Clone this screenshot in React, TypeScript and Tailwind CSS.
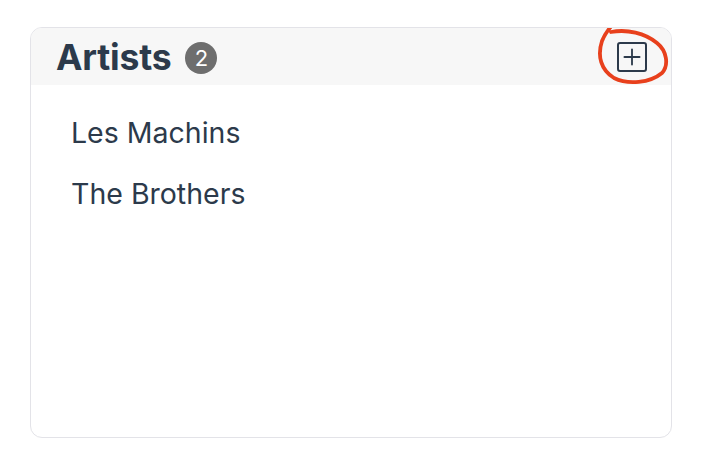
import { Plus } from "lucide-react"

const artists = ["Les Machins", "The Brothers"]

export default function App() {
  return (
    <div className="min-h-screen bg-white pl-[30px] pt-[27px] font-['Inter','Liberation_Sans',sans-serif]">
      <div className="w-[642px] h-[411px] rounded-[12px] border-[1.5px] border-[#e3e3e8] overflow-hidden">
        {/* Header */}
        <div className="relative h-[57px] bg-[#f7f7f7] flex items-center justify-between pl-[25px] pr-[24px]">
          <div className="flex items-center gap-[14px] pt-[2px]">
            <h2 className="text-[35.5px] font-bold text-[#2c3a4b] tracking-[-0.2px] leading-none">Artists</h2>
            <span className="w-[32px] h-[32px] rounded-full bg-[#6e6e6e] text-white text-[22px] flex items-center justify-center leading-none">
              2
            </span>
          </div>
          <button className="w-[30px] h-[30px] rounded-[3px] border-2 border-[#2c3a4b] flex items-center justify-center text-[#2c3a4b]">
            <Plus size={26} strokeWidth={1.7} />
          </button>

          {/* Red annotation circle */}
          <svg
            className="absolute left-[566px] top-[-5px] pointer-events-none"
            width="74"
            height="66"
            viewBox="0 0 74 66"
            fill="none"
          >
            <path
              d="M16 1 C 12 6, 8 10, 5 18 C 0 33, 4 47, 17 55 C 31 62, 53 60, 65 50 C 72 42, 70 28, 60 20 C 48 10, 30 6, 14 9"
              stroke="#e8401c"
              strokeWidth="3.8"
              strokeLinecap="round"
            />
          </svg>
        </div>

        {/* List */}
        <ul className="pl-[40px] pt-[34px] flex flex-col gap-[33px]">
          {artists.map((a) => (
            <li key={a} className="text-[28.5px] leading-[28px] text-[#2c3a4b]">
              {a}
            </li>
          ))}
        </ul>
      </div>
    </div>
  )
}
